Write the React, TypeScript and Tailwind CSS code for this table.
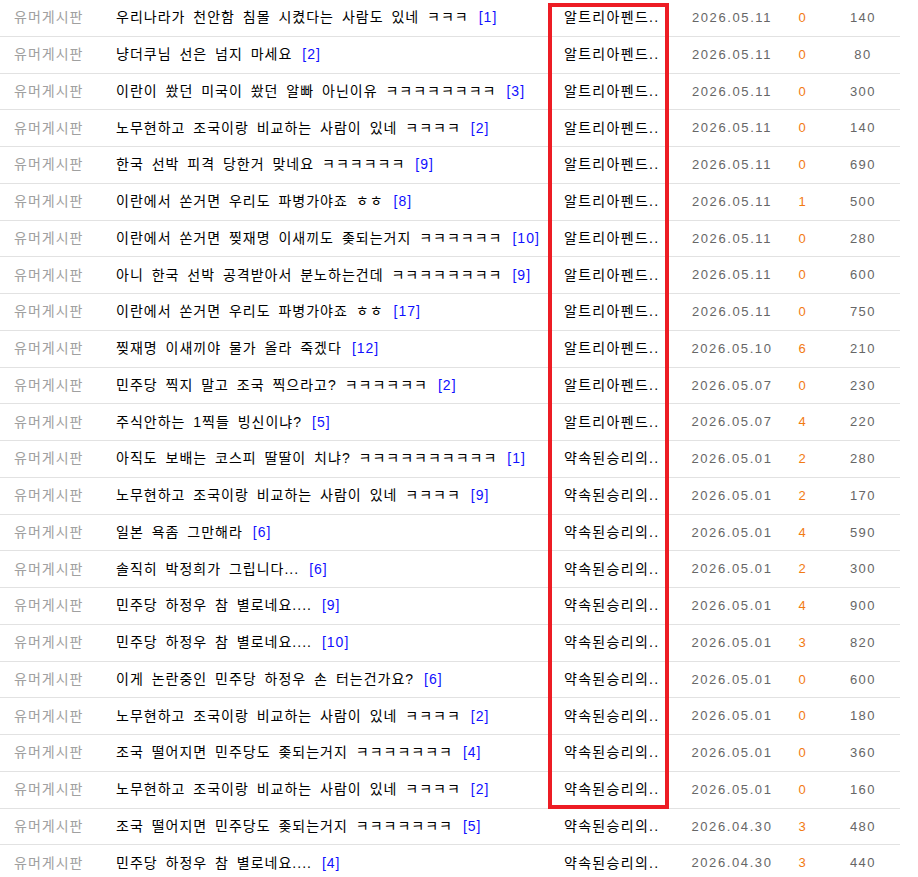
type Post = {
  title: string
  replies: number
  author: string
  date: string
  comments: number
  views: number
}

const A = '알트리아펜드..'
const B = '약속된승리의..'

const posts: Post[] = [
  { title: '우리나라가 천안함 침몰 시켰다는 사람도 있네 ㅋㅋㅋ', replies: 1, author: A, date: '2026.05.11', comments: 0, views: 140 },
  { title: '냥더쿠님 선은 넘지 마세요', replies: 2, author: A, date: '2026.05.11', comments: 0, views: 80 },
  { title: '이란이 쐈던 미국이 쐈던 알빠 아닌이유 ㅋㅋㅋㅋㅋㅋㅋㅋ', replies: 3, author: A, date: '2026.05.11', comments: 0, views: 300 },
  { title: '노무현하고 조국이랑 비교하는 사람이 있네 ㅋㅋㅋㅋ', replies: 2, author: A, date: '2026.05.11', comments: 0, views: 140 },
  { title: '한국 선박 피격 당한거 맞네요 ㅋㅋㅋㅋㅋㅋ', replies: 9, author: A, date: '2026.05.11', comments: 0, views: 690 },
  { title: '이란에서 쏜거면 우리도 파병가야죠 ㅎㅎ', replies: 8, author: A, date: '2026.05.11', comments: 1, views: 500 },
  { title: '이란에서 쏜거면 찢재명 이새끼도 좆되는거지 ㅋㅋㅋㅋㅋㅋ', replies: 10, author: A, date: '2026.05.11', comments: 0, views: 280 },
  { title: '아니 한국 선박 공격받아서 분노하는건데 ㅋㅋㅋㅋㅋㅋㅋㅋ', replies: 9, author: A, date: '2026.05.11', comments: 0, views: 600 },
  { title: '이란에서 쏜거면 우리도 파병가야죠 ㅎㅎ', replies: 17, author: A, date: '2026.05.11', comments: 0, views: 750 },
  { title: '찢재명 이새끼야 물가 올라 죽겠다', replies: 12, author: A, date: '2026.05.10', comments: 6, views: 210 },
  { title: '민주당 찍지 말고 조국 찍으라고? ㅋㅋㅋㅋㅋㅋ', replies: 2, author: A, date: '2026.05.07', comments: 0, views: 230 },
  { title: '주식안하는 1찍들 빙신이냐?', replies: 5, author: A, date: '2026.05.07', comments: 4, views: 220 },
  { title: '아직도 보배는 코스피 딸딸이 치냐? ㅋㅋㅋㅋㅋㅋㅋㅋㅋㅋ', replies: 1, author: B, date: '2026.05.01', comments: 2, views: 280 },
  { title: '노무현하고 조국이랑 비교하는 사람이 있네 ㅋㅋㅋㅋ', replies: 9, author: B, date: '2026.05.01', comments: 2, views: 170 },
  { title: '일본 욕좀 그만해라', replies: 6, author: B, date: '2026.05.01', comments: 4, views: 590 },
  { title: '솔직히 박정희가 그립니다...', replies: 6, author: B, date: '2026.05.01', comments: 2, views: 300 },
  { title: '민주당 하정우 참 별로네요....', replies: 9, author: B, date: '2026.05.01', comments: 4, views: 900 },
  { title: '민주당 하정우 참 별로네요....', replies: 10, author: B, date: '2026.05.01', comments: 3, views: 820 },
  { title: '이게 논란중인 민주당 하정우 손 터는건가요?', replies: 6, author: B, date: '2026.05.01', comments: 0, views: 600 },
  { title: '노무현하고 조국이랑 비교하는 사람이 있네 ㅋㅋㅋㅋ', replies: 2, author: B, date: '2026.05.01', comments: 0, views: 180 },
  { title: '조국 떨어지면 민주당도 좆되는거지 ㅋㅋㅋㅋㅋㅋㅋ', replies: 4, author: B, date: '2026.05.01', comments: 0, views: 360 },
  { title: '노무현하고 조국이랑 비교하는 사람이 있네 ㅋㅋㅋㅋ', replies: 2, author: B, date: '2026.05.01', comments: 0, views: 160 },
  { title: '조국 떨어지면 민주당도 좆되는거지 ㅋㅋㅋㅋㅋㅋㅋ', replies: 5, author: B, date: '2026.04.30', comments: 3, views: 480 },
  { title: '민주당 하정우 참 별로네요....', replies: 4, author: B, date: '2026.04.30', comments: 3, views: 440 },
]

export default function App() {
  return (
    <div className="relative min-h-screen bg-white font-['Liberation_Sans','Noto_Sans_CJK_KR',sans-serif] text-[13px]">
      <div className="w-[900px]">
        {posts.map((p, i) => (
          <div
            key={i}
            className="grid h-[36.76px] grid-cols-[100px_448px_128px_112px_28px_84px] items-center border-b border-[#e2e2e2] whitespace-nowrap"
          >
            <div className="pl-[14px] text-[14px] tracking-[1px] text-[#a0a0a0]">유머게시판</div>
            <div className="pl-[16px] text-[14px] tracking-[1px] text-black [word-spacing:3px]">
              {p.title}
              <span className="ml-[10px] text-[14px] tracking-[1px] text-[#1010ff]">[{p.replies}]</span>
            </div>
            <div className="pl-[16px] text-[14px] tracking-[1.3px] text-black">{p.author}</div>
            <div className="text-center tracking-[1.6px] text-[#666]">{p.date}</div>
            <div className="text-center text-[#f27a12]">{p.comments}</div>
            <div className="pl-[10px] text-center tracking-[1.5px] text-[#666]">{p.views}</div>
          </div>
        ))}
      </div>
      <div className="pointer-events-none absolute left-[548px] top-[3px] h-[806px] w-[121px] border-4 border-[#ed1c24]" />
    </div>
  )
}
